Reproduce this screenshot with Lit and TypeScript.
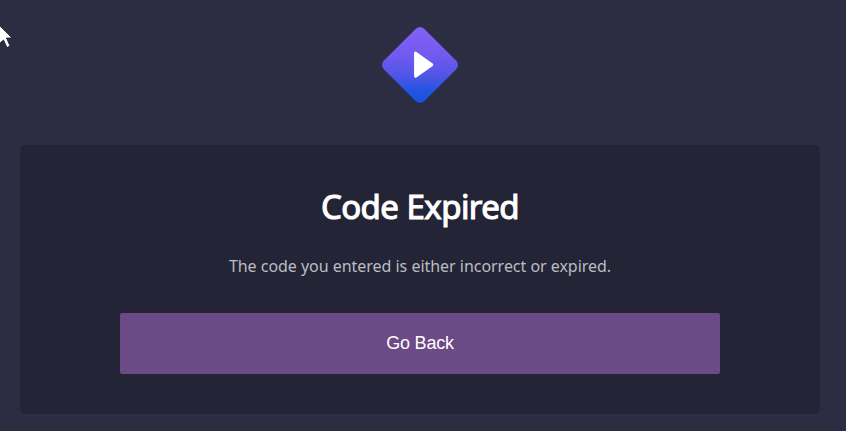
import { LitElement, html, css } from "lit";
import { customElement } from "lit/decorators.js";

@customElement("app-root")
class AppRoot extends LitElement {
  static styles = css`
    :host {
      display: block;
      position: relative;
      box-sizing: border-box;
      height: 431px;
      padding: 26px 26px 0 20px;
      overflow: hidden;
      background: #2c2c43;
      color: #fff;
      font-family: "Noto Sans", sans-serif;
    }
    .logo {
      display: block;
      width: 78px;
      height: 78px;
      margin: 0 auto 41px;
    }
    .card {
      box-sizing: border-box;
      height: 269px;
      padding: 36px 100px 0;
      border-radius: 5px;
      background: #232435;
      text-align: center;
    }
    .title {
      margin: 0;
      font-size: 33px;
      font-weight: 400;
      line-height: 52px;
      letter-spacing: -0.55px;
      -webkit-text-stroke: 1.1px #fff;
    }
    .message {
      margin: 20px 0 0;
      font-size: 16px;
      line-height: 26px;
      letter-spacing: -0.03px;
      color: #bcbcc3;
    }
    .back {
      display: block;
      width: 100%;
      height: 61px;
      margin-top: 34px;
      padding: 0;
      border: 0;
      border-radius: 2px;
      background: #6c4a86;
      color: #fff;
      font: 18px/61px "Liberation Sans", Arial, sans-serif;
      letter-spacing: -0.25px;
    }
    .cursor {
      position: absolute;
      left: 0;
      top: 24px;
      width: 14px;
      height: 26px;
    }
  `;

  render() {
    return html`
      <svg class="logo" viewBox="-0.5 -0.5 79 79">
        <defs>
          <linearGradient id="fade" x1="0" y1="0" x2="0" y2="1">
            <stop offset="0" stop-color="#8360f5" />
            <stop offset="0.35" stop-color="#755af0" />
            <stop offset="0.65" stop-color="#4e55e6" />
            <stop offset="0.85" stop-color="#2055e2" />
            <stop offset="1" stop-color="#1652dc" />
          </linearGradient>
        </defs>
        <path
          fill="url(#fade)"
          d="M34.5 2.5Q39 -1.5 43.5 2.5L75.5 34.5Q79.5 39 75.5 43.5L43.5 75.5Q39 79.5 34.5 75.5L2.5 43.5Q-1.5 39 2.5 34.5Z"
        />
        <path
          fill="#fff"
          stroke="#fff"
          stroke-width="3"
          stroke-linejoin="round"
          d="M34.5 27V50.5L51 38.8Z"
        />
      </svg>
      <main class="card">
        <h1 class="title">Code Expired</h1>
        <p class="message">The code you entered is either incorrect or expired.</p>
        <button class="back">Go Back</button>
      </main>
      <svg class="cursor" viewBox="0 0 14 26">
        <path
          fill="#fff"
          stroke="#1b1b26"
          stroke-width="0.8"
          d="M-1 1L12 14H6.5L10 22L7 23.5L3.5 16L-1 20Z"
        />
      </svg>
    `;
  }
}
